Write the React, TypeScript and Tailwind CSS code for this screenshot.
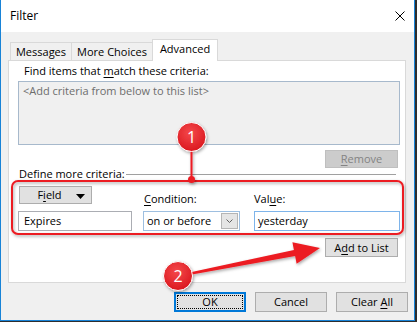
import React from "react";

const U = ({ children }: { children: React.ReactNode }) => (
  <span className="underline underline-offset-2 decoration-1">{children}</span>
);

function Btn({
  children,
  className = "",
}: {
  children: React.ReactNode;
  className?: string;
}) {
  return (
    <div
      className={
        "flex items-center justify-center border border-[#adadad] bg-[#e1e1e1] text-black " +
        className
      }
    >
      <span>{children}</span>
    </div>
  );
}

function Annotations() {
  return (
    <svg
      className="absolute left-0 top-0 pointer-events-none"
      width="417"
      height="322"
      viewBox="0 0 417 322"
    >
      <defs>
        <filter id="sh" x="-20%" y="-20%" width="140%" height="140%">
          <feDropShadow dx="1" dy="1.5" stdDeviation="1.5" floodColor="#000" floodOpacity="0.35" />
        </filter>
        <radialGradient id="dot" cx="45%" cy="35%" r="70%">
          <stop offset="0%" stopColor="#f4484b" />
          <stop offset="100%" stopColor="#d9151c" />
        </radialGradient>
      </defs>

      {/* box round the criteria row */}
      <rect x="12" y="181" width="391" height="53" rx="6" fill="none" stroke="#ec1c24" strokeWidth="2" filter="url(#sh)" />

      {/* marker 1 */}
      <g filter="url(#sh)">
        <line x1="191.5" y1="150" x2="191.5" y2="179" stroke="#ec1c24" strokeWidth="2" />
        <circle cx="191.5" cy="179.5" r="3.5" fill="#ec1c24" />
        <circle cx="191.5" cy="137" r="14.5" fill="url(#dot)" stroke="#fff" strokeWidth="1" />
      </g>
      <text x="191.5" y="143" textAnchor="middle" fill="#fff" fontSize="16" fontFamily="'Open Sans', sans-serif">
        1
      </text>

      {/* marker 2 and arrow */}
      <g filter="url(#sh)">
        <polygon
          points="177.8,275 293.9,250.1 292.4,242.2 320,248 296.6,263.8 295.1,255.9 178.2,277"
          fill="#ec1c24"
        />
        <circle cx="178" cy="276" r="14.5" fill="url(#dot)" stroke="#fff" strokeWidth="1" />
      </g>
      <text x="178" y="282" textAnchor="middle" fill="#fff" fontSize="16" fontFamily="'Open Sans', sans-serif">
        2
      </text>
    </svg>
  );
}

export default function App() {
  return (
    <div className="relative w-[417px] h-[322px] bg-[#2e2e2e] font-['Segoe_UI','Open_Sans',sans-serif] text-[11px] leading-[16px] text-black">
      <div className="w-[415px] h-[321px] bg-[#f0f0f0] border-x border-b border-[#1883d7] flex flex-col">
        {/* title bar */}
        <div className="h-[32px] shrink-0 bg-white flex items-center justify-between pl-[9px] pr-[9px]">
          <span className="text-[12px]">Filter</span>
          <svg width="10" height="10" viewBox="0 0 10 10">
            <path d="M0.5 0.5 L9.5 9.5 M9.5 0.5 L0.5 9.5" stroke="#000" strokeWidth="1" />
          </svg>
        </div>

        {/* tabs */}
        <div className="mt-[7px] ml-[9px] flex items-end h-[21px]">
          <div className="h-[18px] w-[62px] border border-b-0 border-[#d9d9d9] bg-[#f0f0f0] flex items-center justify-center">
            Messages
          </div>
          <div className="-ml-px h-[18px] w-[82px] border border-b-0 border-[#d9d9d9] bg-[#f0f0f0] flex items-center justify-center">
            More Choices
          </div>
          <div className="-ml-px relative z-10 -mb-px h-[22px] w-[66px] border border-b-0 border-[#d9d9d9] bg-white flex items-start justify-center pt-[1px]">
            Advanced
          </div>
        </div>

        {/* panel */}
        <div className="ml-[7px] w-[398px] h-[223px] shrink-0 border border-[#d9d9d9] bg-white flex flex-col">
          <div className="pl-[15px] pt-[2px]">
            Find items that <U>m</U>atch these criteria:
          </div>
          <div className="ml-[9px] mt-[2px] w-[382px] h-[64px] border border-[#a7b9cc] bg-[#f0f0f0] pl-[4px] pt-[1px] text-[#6d6d6d]">
            &lt;Add criteria from below to this list&gt;
          </div>
          <div className="ml-[316px] mt-[5px] w-[73px] h-[18px] border border-[#bfbfbf] bg-[#cccccc] text-[#838383] flex items-center justify-center">
            <span>
              <U>R</U>emove
            </span>
          </div>
          <div className="flex items-center pl-[10px] pr-[9px] h-[12px] leading-[12px]">
            <span>Define more criteria:</span>
            <div className="flex-1 h-px bg-[#a0a0a0] ml-[1px]" />
          </div>

          {/* criteria */}
          <div className="flex items-end ml-[9px] mt-[6px]">
            <div className="flex flex-col w-[114px]">
              <div className="relative ml-[1px] w-[73px] h-[18px] border border-[#adadad] bg-[#e1e1e1] flex items-center justify-center">
                <span className="mr-[12px]">
                  F<U>i</U>eld
                </span>
                <svg className="absolute right-[6px] top-[7px]" width="9" height="5" viewBox="0 0 9 5">
                  <path d="M0 0 L9 0 L4.5 5 Z" fill="#000" />
                </svg>
              </div>
              <div className="mt-[7px] h-[20px] border border-[#abadb3] bg-white pl-[5px] flex items-center">
                Expires
              </div>
            </div>
            <div className="flex flex-col w-[97px] ml-[11px]">
              <div className="leading-[14px] pl-[1px]">
                <U>C</U>ondition:
              </div>
              <div className="mt-[5px] h-[20px] border border-[#9ebfe0] bg-white flex items-stretch">
                <div className="flex-1 pl-[3px] flex items-center">on or before</div>
                <div className="w-[17px] m-px border border-[#b5b5b5] bg-[#e5e5e5] flex items-center justify-center">
                  <svg width="7" height="4" viewBox="0 0 7 4">
                    <path d="M0.5 0.5 L3.5 3.5 L6.5 0.5" stroke="#606060" fill="none" strokeWidth="1" />
                  </svg>
                </div>
              </div>
            </div>
            <div className="flex flex-col w-[146px] ml-[14px]">
              <div className="leading-[14px]">
                Val<U>u</U>e:
              </div>
              <div className="mt-[5px] h-[20px] border border-[#7eb4ea] bg-white pl-[3px] flex items-center">
                yesterday
              </div>
            </div>
          </div>

          <Btn className="ml-[316px] mt-[7px] w-[73px] h-[19px]">
            A<U>d</U>d to List
          </Btn>
        </div>

        {/* dialog buttons */}
        <div className="mt-[9px] flex justify-end gap-[9px] pr-[6px]">
          <div className="w-[72px] h-[20px] border-2 border-[#0078d7] bg-[#e1e1e1] p-px">
            <div className="w-full h-full border border-dotted border-black flex items-center justify-center">
              OK
            </div>
          </div>
          <Btn className="w-[72px] h-[20px]">Cancel</Btn>
          <Btn className="w-[72px] h-[20px]">
            Clear <U>A</U>ll
          </Btn>
        </div>
      </div>
      <Annotations />
    </div>
  );
}
